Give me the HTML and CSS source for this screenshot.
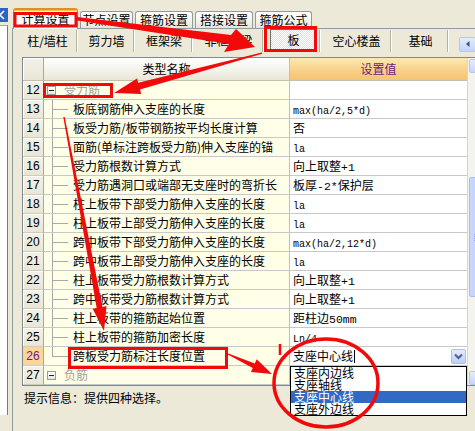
FILE: index.html
```html
<!DOCTYPE html>
<html lang="zh-CN">
<head>
<meta charset="utf-8">
<title>计算设置</title>
<link rel="stylesheet" href="styles.css">
</head>
<body>
<div class="app">
  <aside class="side">
    <div class="side-title"><svg width="8" height="14" viewBox="0 0 8 14"><path d="M0 7 L4 3 M0 7 L4 11" stroke="#fff" stroke-width="1.6" fill="none"/></svg></div>
    <div class="side-body"></div>
  </aside>
  <main class="main">
    <div class="tabs">
      <div class="tab active w1">计算设置</div>
      <div class="tab w2">节点设置</div>
      <div class="tab w3">箍筋设置</div>
      <div class="tab w3">搭接设置</div>
      <div class="tab w4">箍筋公式</div>
    </div>
    <div class="page">
      <div class="subtabs">
        <div class="st s1">柱/墙柱</div>
        <div class="st s2">剪力墙</div>
        <div class="st s3">框架梁</div>
        <div class="st s4">非框架梁</div>
        <div class="st s5"><span class="pressed">板</span></div>
        <div class="st s4">空心楼盖</div>
        <div class="st s2">基础</div>
        <div class="nav"><svg width="8" height="8" viewBox="0 0 8 8"><path d="M5.5 1 L2 4 L5.5 7 Z" fill="#3C4F7A"/></svg></div>
      </div>
      <div class="grid">
        <div class="gm">
          <div class="row head">
            <div class="n"></div>
            <div class="nm hc">类型名称</div>
            <div class="val hv">设置值</div>
          </div>
          <div class="row">
            <div class="n">12</div>
            <div class="nm g"><span class="box"></span><span class="gt">受力筋</span></div>
            <div class="val"></div>
          </div>
          <div class="row">
            <div class="n">13</div>
            <div class="nm c">板底钢筋伸入支座的长度</div>
            <div class="val"><span class="m">max(ha/2,5*d)</span></div>
          </div>
          <div class="row">
            <div class="n">14</div>
            <div class="nm c">板受力筋/板带钢筋按平均长度计算</div>
            <div class="val">否</div>
          </div>
          <div class="row">
            <div class="n">15</div>
            <div class="nm c">面筋(单标注跨板受力筋)伸入支座的锚</div>
            <div class="val"><span class="m">la</span></div>
          </div>
          <div class="row">
            <div class="n">16</div>
            <div class="nm c">受力筋根数计算方式</div>
            <div class="val">向上取整<span class="l">+1</span></div>
          </div>
          <div class="row">
            <div class="n">17</div>
            <div class="nm c">受力筋遇洞口或端部无支座时的弯折长</div>
            <div class="val">板厚<span class="l">-2*</span>保护层</div>
          </div>
          <div class="row">
            <div class="n">18</div>
            <div class="nm c">柱上板带下部受力筋伸入支座的长度</div>
            <div class="val"><span class="m">la</span></div>
          </div>
          <div class="row">
            <div class="n">19</div>
            <div class="nm c">柱上板带上部受力筋伸入支座的长度</div>
            <div class="val"><span class="m">la</span></div>
          </div>
          <div class="row">
            <div class="n">20</div>
            <div class="nm c">跨中板带下部受力筋伸入支座的长度</div>
            <div class="val"><span class="m">max(ha/2,12*d)</span></div>
          </div>
          <div class="row">
            <div class="n">21</div>
            <div class="nm c">跨中板带上部受力筋伸入支座的长度</div>
            <div class="val"><span class="m">la</span></div>
          </div>
          <div class="row">
            <div class="n">22</div>
            <div class="nm c">柱上板带受力筋根数计算方式</div>
            <div class="val">向上取整<span class="l">+1</span></div>
          </div>
          <div class="row">
            <div class="n">23</div>
            <div class="nm c">跨中板带受力筋根数计算方式</div>
            <div class="val">向上取整<span class="l">+1</span></div>
          </div>
          <div class="row">
            <div class="n">24</div>
            <div class="nm c">柱上板带的箍筋起始位置</div>
            <div class="val">距柱边<span class="l">50mm</span></div>
          </div>
          <div class="row">
            <div class="n">25</div>
            <div class="nm c">柱上板带的箍筋加密长度</div>
            <div class="val"><span class="m">Ln/4</span></div>
          </div>
          <div class="row cur">
            <div class="n">26</div>
            <div class="nm c last">跨板受力筋标注长度位置</div>
            <div class="val combo"><span>支座中心线</span><span class="caret"></span><span class="dd"><svg width="9" height="7" viewBox="0 0 9 7"><path d="M1 1.5 L4.5 5 L8 1.5" stroke="#4D6185" stroke-width="2" fill="none"/></svg></span></div>
          </div>
          <div class="row">
            <div class="n">27</div>
            <div class="nm g"><span class="box"></span><span class="gt">负筋</span></div>
            <div class="val"></div>
          </div>
        </div>
        <div class="vscroll">
          <div class="sb-btn up"></div>
          <div class="sb-gap1"></div>
          <div class="thumb"></div>
          <div class="sb-gap2"></div>
          <div class="sb-btn down"></div>
        </div>
      </div>
      <div class="status">提示信息：提供四种选择。</div>
    </div>
  </main>
</div>

<ul class="dropdown">
  <li>支座内边线</li>
  <li>支座轴线</li>
  <li class="sel">支座中心线</li>
  <li>支座外边线</li>
</ul>

<svg class="marks" width="475" height="431" viewBox="0 0 475 431">
  <g fill="none" stroke="#F20A0A" stroke-width="3">
    <rect x="15" y="13.5" width="61" height="12.5"/>
    <rect x="265.5" y="27.5" width="50" height="23"/>
    <rect x="44.5" y="84.5" width="67" height="12"/>
    <rect x="69.5" y="348.5" width="157" height="19"/>
    <ellipse cx="326" cy="383" rx="52" ry="44" stroke-width="3.5"/>
    <line x1="280" y1="344" x2="280" y2="355" stroke-width="2.5"/>
  </g>
  <g fill="#F20A0A">
    <polygon points="77,17 231,35 236,29 255,47 224,52 229,44 77,20.5"/>
    <polygon points="261.8,52.4 138.2,82.8 137,78.5 114,93 141.2,93.9 140,89.6 262.2,53.8"/>
    <polygon points="63.3,117.1 96.7,307.9 92.7,308.7 104,331 106.5,306.1 102.5,306.9 64.7,116.9"/>
    <polygon points="228.3,353.4 254.8,363.4 256.7,359.3 272,374 250.9,372.1 252.8,368 227.7,354.6"/>
  </g>
</svg>
</body>
</html>
```

FILE: styles.css
```css
* { box-sizing: border-box; margin: 0; padding: 0; }
html, body { width: 475px; height: 431px; overflow: hidden; }
body {
  position: relative;
  background: #ECE9D8;
  color: #000;
  font: 12px/1 "Noto Sans CJK SC", "Noto Sans", sans-serif;
}

.app { display: flex; height: 431px; }

/* left docked panel */
.side { width: 8px; flex: none; display: flex; flex-direction: column; }
.side-title { margin-top: 8px; height: 14px; background: #2D63C8; overflow: hidden; }
.side-title svg { display: block; }
.side-body {
  margin-top: 3px; height: 390px; background: #fff;
  border-top: 1px solid #ACA899; border-right: 1px solid #7A7A7A;
}

/* main tab control */
.main { flex: 1; min-width: 0; margin-left: 4px; display: flex; flex-direction: column; }
.tabs {
  height: 28px; flex: none; display: flex; align-items: flex-end;
  padding-left: 1px; position: relative; z-index: 1;
}
.tab {
  height: 17px; margin-right: 2px; text-align: center; line-height: 15px;
  border: 1px solid #919B9C; border-bottom: none; border-radius: 3px 3px 0 0;
  background: linear-gradient(#FFFFFF, #F3F2EC 60%, #E6E4DA);
  white-space: nowrap;
}
.tab.active {
  height: 21px; margin-bottom: -1px; line-height: 17px;
  background: #FCFCFE;
  border-top: 2px solid #E68B2C; box-shadow: inset 0 1px #FFC73C;
}
.w1 { width: 65px; }
.w2 { width: 53px; }
.w3 { width: 58px; }
.w4 { width: 57px; }

.page {
  flex: 1; display: flex; flex-direction: column;
  border-left: 1px solid #919B9C; border-top: 1px solid #919B9C;
  padding: 1px 0 0 4px; overflow: hidden;
}

/* second level tab buttons */
.subtabs { height: 22px; flex: none; display: flex; align-items: center; margin-bottom: 5px; }
.st {
  flex: none; height: 22px; line-height: 22px; text-align: center;
  box-shadow: inset -1px 0 #FFFFFF, inset -2px 0 #B5B2A2;
}
.s1 { width: 61px; }
.s2 { width: 57px; }
.s3 { width: 58px; }
.s4 { width: 71px; }
.s5 { width: 57px; text-align: left; padding-left: 6px; }
.pressed {
  display: block; width: 47px; height: 22px; margin-top: -1px; line-height: 20px; text-align: center;
  border: 1px solid; border-color: #716F64 #FFFFFF #FFFFFF #716F64;
  background: repeating-conic-gradient(#FFFFFF 0 25%, #E4E1D2 0 50%) 0 0 / 2px 2px;
}
.nav {
  flex: none; width: 17px; height: 15px; margin-left: 10px; margin-top: 6px;
  border: 1px solid #B4C8F6; border-radius: 2px;
  background: linear-gradient(#E4ECFD, #C3D4FB);
  display: flex; align-items: center; padding-left: 4px;
}
.nav svg { display: block; }

/* property grid */
.grid {
  flex: none; height: 329px; margin-left: 5px; display: flex; overflow: hidden;
  border: 1px solid #7F8A90; border-right: none;
}
.gm { flex: none; width: 444px; }
.row { display: grid; grid-template-columns: 21px 246px 177px; height: 19px; }
.row > div { border-bottom: 1px solid #C8C8C8; height: 19px; line-height: 18px; white-space: nowrap; overflow: hidden; }
.n {
  text-align: center; font: 12px/18px "Liberation Sans", Arial, sans-serif;
  background: linear-gradient(#F4F2E8, #E9E6D7);
  border-right: 1px solid #ACA899; box-shadow: inset 1px 1px #FFFFFF;
}
.row > .n { border-bottom-color: #CFCCBD; }
.nm { background-color: #FFFFE7; border-right: 1px solid #C0C0C0; }
.val { background: #FFFFFF; padding-left: 3px; }
.m { font: 10px "Liberation Mono", monospace; }
.l { font: 11.5px "Liberation Mono", monospace; }

.row.head { height: 23px; }
.row.head > div { height: 23px; line-height: 22px; border-bottom-color: #C3C0AE; }
.hc { text-align: center; background: linear-gradient(#FFFFFF, #F4F3EA 55%, #E9E6D6); }
.hv { text-align: center; color: #6E1A7E; padding-left: 0; background: linear-gradient(#FDE8B6, #F8CF85 60%, #F4C472); }

/* tree */
.c {
  padding-left: 29px;
  background:
    linear-gradient(#A8A8A8, #A8A8A8) 8px 0 / 1px 100% no-repeat,
    linear-gradient(#A8A8A8, #A8A8A8) 9px 9px / 15px 1px no-repeat,
    #FFFFE7;
}
.c.last {
  background:
    linear-gradient(#A8A8A8, #A8A8A8) 8px 0 / 1px 10px no-repeat,
    linear-gradient(#A8A8A8, #A8A8A8) 9px 9px / 15px 1px no-repeat,
    #FFFFE7;
}
.g { display: flex; align-items: center; padding-left: 3px; }
.box {
  flex: none; width: 9px; height: 9px; position: relative;
  border: 1px solid #9A9A9A; background: linear-gradient(#FFFFFF, #E6E6E0);
}
.box::after { content: ""; position: absolute; left: 1px; top: 3px; width: 5px; height: 1px; background: #222; }
.gt { margin-left: 8px; color: #A0A0A0; }

.row.cur .n { background: #FCD59B; color: #6E1A7E; box-shadow: none; }
.combo { display: flex; align-items: center; }
.caret { width: 1px; height: 13px; background: #000; margin-left: 1px; }
.dd {
  margin-left: auto; margin-right: 1px; width: 15px; height: 15px;
  border: 1px solid #A9BFEE; border-radius: 2px;
  background: linear-gradient(#E3EBFD, #BDCFF9);
  display: flex; align-items: center; justify-content: center;
}
.dd svg { display: block; }

/* scrollbar */
.vscroll { flex: none; width: 18px; border-left: 1px solid #D8D6CB; background: #F4F3EE; padding-left: 1px; }
.sb-btn { height: 14px; border: 1px solid #B4C8F6; border-radius: 2px; background: linear-gradient(#E6EEFD, #C4D4FB); }
.sb-btn.up { margin-top: 1px; }
.sb-gap1 { height: 104px; }
.thumb {
  height: 120px; border: 1px solid #A8BEEE; border-radius: 2px;
  background:
    repeating-linear-gradient(#8EA7E0 0 1px, transparent 1px 2px) 4px 56px / 8px 8px no-repeat,
    linear-gradient(90deg, #C9D8FC, #BBCDFA);
}
.sb-gap2 { height: 74px; }

.status { margin: 3px 0 0 7px; line-height: 17px; }

/* open combo list */
.dropdown {
  position: absolute; left: 290px; top: 366px; z-index: 5;
  width: 177px; height: 50px; list-style: none;
  background: #FFFFFF; border: 1px solid #000;
}
.dropdown li { height: 12px; line-height: 12px; padding-left: 3px; white-space: nowrap; }
.dropdown li.sel { background: #316AC5; color: #FFFFFF; }

/* red annotation overlay */
.marks { position: absolute; left: 0; top: 0; z-index: 10; pointer-events: none; }
```
